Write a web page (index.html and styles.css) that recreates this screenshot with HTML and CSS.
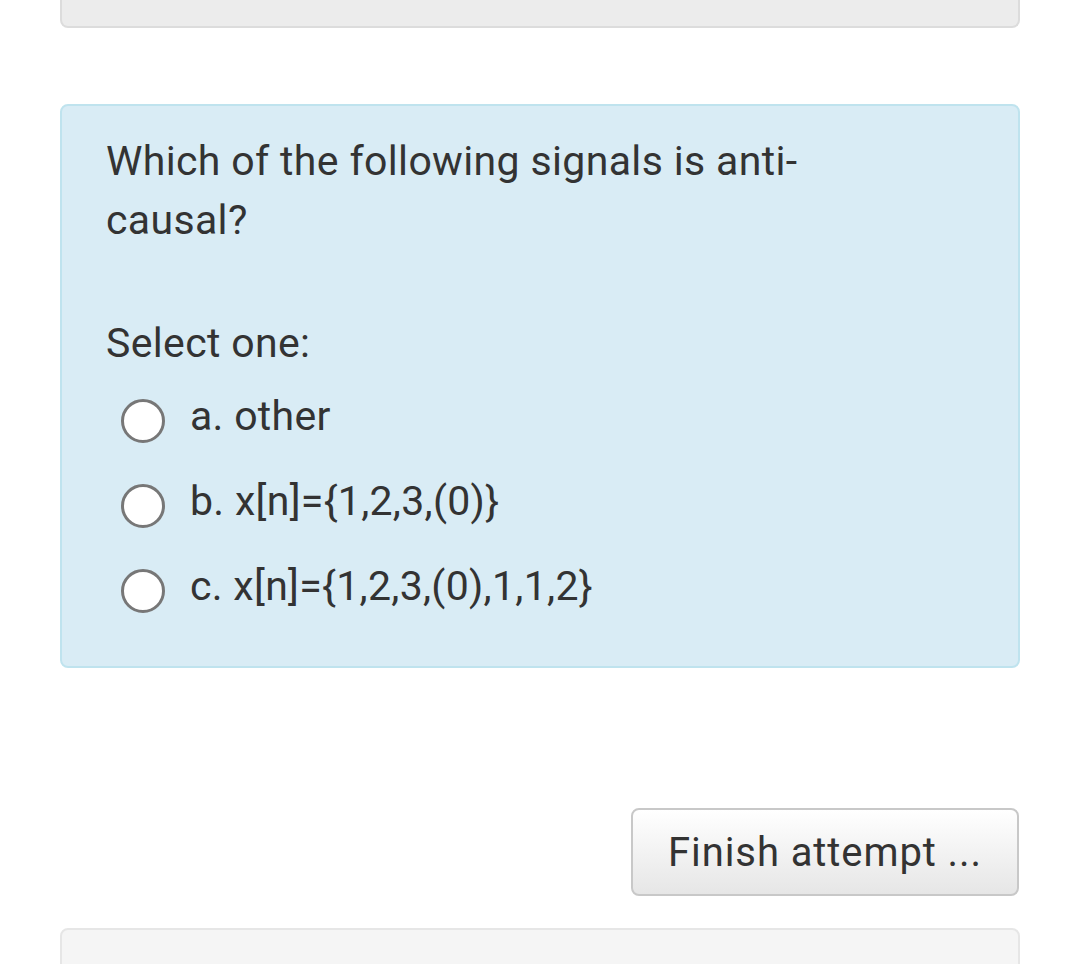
FILE: index.html
```html
<!DOCTYPE html>
<html>
<head>
<meta charset="utf-8">
<link rel="stylesheet" href="styles.css">
</head>
<body>
<div class="page">
  <div class="prev-box"></div>
  <div class="question">
    <div class="qtext">Which of the following signals is anti-<br>causal?</div>
    <div class="prompt">Select one:</div>
    <div class="answers">
      <label class="opt"><span class="radio"></span><span class="label">a. other</span></label>
      <label class="opt"><span class="radio"></span><span class="label">b. x[n]={1,2,3,(0)}</span></label>
      <label class="opt"><span class="radio"></span><span class="label">c. x[n]={1,2,3,(0),1,1,2}</span></label>
    </div>
  </div>
  <div class="actions">
    <button class="finish">Finish attempt ...</button>
  </div>
  <div class="next-box"></div>
</div>
</body>
</html>
```
FILE: styles.css
```css
html, body {
  margin: 0;
  padding: 0;
  background: #ffffff;
}
body {
  font-family: Roboto, "Liberation Sans", sans-serif;
  color: #333333;
  overflow: hidden;
  height: 964px;
}
.page {
  width: 960px;
  margin-left: 60px;
  display: flex;
  flex-direction: column;
}
.prev-box {
  height: 26px;
  background: #ececec;
  border: 2px solid #dcdcdc;
  border-top: none;
  border-radius: 0 0 8px 8px;
}
.question {
  margin-top: 76px;
  background: #d9ecf5;
  border: 2px solid #bfe3ee;
  border-radius: 8px;
  padding: 26px 44px 30px 44px;
  height: 564px;
  box-sizing: border-box;
  font-size: 41px;
  letter-spacing: 0.35px;
}
.qtext {
  line-height: 59px;
}
.prompt {
  margin-top: 64px;
  line-height: 59px;
}
.answers {
  display: flex;
  flex-direction: column;
}
.opt {
  display: flex;
  align-items: center;
  height: 85px;
  padding-left: 15px;
  letter-spacing: 0.3px;
}
.radio {
  width: 38px;
  height: 38px;
  border: 3px solid #777777;
  border-radius: 50%;
  background: #ffffff;
  flex: none;
  margin-right: 25px;
  margin-top: 10px;
}
.actions {
  display: flex;
  justify-content: flex-end;
  margin-top: 140px;
}
.finish {
  width: 388px;
  height: 88px;
  font-family: Roboto, "Liberation Sans", sans-serif;
  font-size: 40px;
  letter-spacing: 0.9px;
  color: #333333;
  background: linear-gradient(#ffffff, #e6e6e6);
  border: 2px solid #c8c8c8;
  border-radius: 8px;
  margin-right: 1px;
  padding: 0;
}
.next-box {
  margin-top: 32px;
  height: 60px;
  background: #f5f5f5;
  border: 2px solid #e6e6e6;
  border-radius: 8px;
}
```
